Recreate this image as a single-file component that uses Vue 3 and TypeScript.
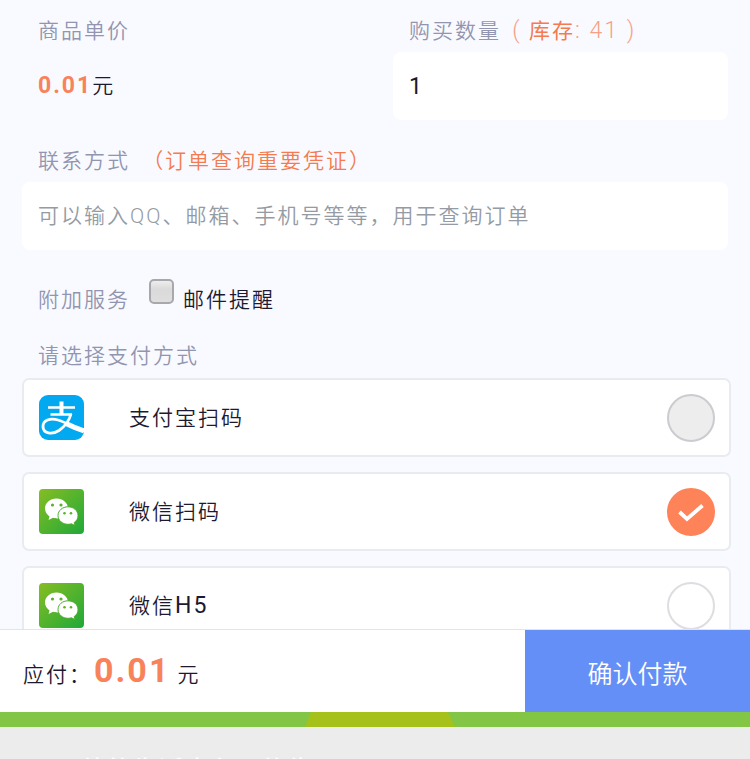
<script setup lang="ts">
import { ref } from 'vue'

interface PayMethod {
  id: string
  name: string
  suffix?: string
  brand: 'alipay' | 'wechat'
  muted?: boolean
}

const methods: PayMethod[] = [
  { id: 'alipay-scan', name: '支付宝扫码', brand: 'alipay', muted: true },
  { id: 'wechat-scan', name: '微信扫码', brand: 'wechat' },
  { id: 'wechat-h5', name: '微信', suffix: 'H5', brand: 'wechat' },
]

const stock = 41
const price = '0.01'
const quantity = ref('1')
const contact = ref('')
const mailNotice = ref(false)
const selected = ref('wechat-scan')
</script>

<template>
  <div class="page">
    <form class="order" @submit.prevent>
      <div class="content">
        <div class="summary">
          <section>
            <h2 class="label">商品单价</h2>
            <p class="price"><strong>{{ price }}</strong>元</p>
          </section>
          <section>
            <label class="label" for="quantity">购买数量 <span class="stock">( <b>库存</b>: {{ stock }} )</span></label>
            <input id="quantity" v-model="quantity" class="field" type="text" inputmode="numeric">
          </section>
        </div>

        <section class="contact">
          <label class="label" for="contact">联系方式 <span class="hint">（订单查询重要凭证）</span></label>
          <input id="contact" v-model="contact" class="field" type="text" placeholder="可以输入QQ、邮箱、手机号等等，用于查询订单">
        </section>

        <div class="extras">
          <span class="label">附加服务</span>
          <input id="mail" v-model="mailNotice" class="tick" type="checkbox">
          <label class="mail" for="mail">邮件提醒</label>
        </div>

        <fieldset class="methods">
          <legend class="label">请选择支付方式</legend>
          <label v-for="m in methods" :key="m.id" class="method" :for="m.id">
            <svg v-if="m.brand === 'alipay'" class="logo" viewBox="0 0 45 45" aria-hidden="true">
              <rect width="45" height="45" rx="9" fill="#02a9f1" />
              <g fill="none" stroke="#fff">
                <path d="M9 12.500H36M11.500 19.500H33" stroke-width="2.400" />
                <path d="M22.500 6.500V19" stroke-width="4" />
                <path d="M32 19C30 26.500 25 32 20 35.500C13 40 4 38.500 4 31.500C4 25.500 11 22.500 19 25C27 27.500 34 32 45 36" stroke-width="2.800" />
                <path d="M27 28.500C33 31.500 39 34 45 36" stroke-width="5" />
              </g>
            </svg>
            <svg v-else class="logo" viewBox="0 0 45 45" aria-hidden="true">
              <defs>
                <linearGradient :id="`${m.id}-green`" x1="0" y1="0" x2="1" y2="1">
                  <stop offset="0" stop-color="#86bd23" />
                  <stop offset="1" stop-color="#1fa938" />
                </linearGradient>
              </defs>
              <rect width="45" height="45" rx="4" :fill="`url(#${m.id}-green)`" />
              <path d="M17.500 9.500C11 9.500 6 14 6 19.500C6 22.800 7.800 25.600 10.500 27.400L9.500 31L14 28.800C15.500 29.300 16.500 29.400 18.500 29.400C24.500 29.400 29 25 29 19.500C29 14 24 9.500 17.500 9.500Z" fill="#fff" />
              <path d="M29 17.800C23.500 17.800 19 21.500 19 26.500C19 31.500 23.500 35.300 29 35.300C30.500 35.300 31.500 35.100 32.500 34.800L36 36.600L35.200 33.500C37.700 31.900 39 29.500 39 26.500C39 21.500 34.500 17.800 29 17.800Z" fill="#fff" stroke="#4caf2c" stroke-width="1" />
              <g fill="#5cb32b">
                <circle cx="13.500" cy="16" r="1.600" />
                <circle cx="22" cy="16" r="1.600" />
                <circle cx="25.500" cy="24.200" r="1.300" />
                <circle cx="32" cy="24.200" r="1.300" />
              </g>
            </svg>
            <span class="name">{{ m.name }}<span v-if="m.suffix" class="latin">{{ m.suffix }}</span></span>
            <input :id="m.id" v-model="selected" class="radio" :class="{ muted: m.muted }" type="radio" name="method" :value="m.id">
            <svg v-if="selected === m.id" class="check" viewBox="0 0 48 48" aria-hidden="true">
              <path d="M12.500 24L20 31L35.500 17.500" fill="none" stroke="#fff" stroke-width="3.800" />
            </svg>
          </label>
        </fieldset>
      </div>

      <footer class="pay">
        <p class="total">应付：<strong>{{ price }}</strong> 元</p>
        <button class="confirm" type="submit">确认付款</button>
      </footer>
    </form>

    <svg class="band" viewBox="0 0 750 15" preserveAspectRatio="none" aria-hidden="true">
      <rect width="750" height="15" fill="#83c645" />
      <path d="M311 0H448L455 15H305Z" fill="#a5c11a" />
    </svg>
    <div class="below"><p>他的生活太久不炸街了</p></div>
  </div>
</template>

<style>
body {
  margin: 0;
}
</style>

<style scoped>
.page {
  display: flex;
  flex-direction: column;
  height: 100vh;
  overflow: hidden;
  background: #ececec;
  color: #1c1930;
  font-family: Roboto, "Noto Sans CJK SC", sans-serif;
  font-size: 21px;
  font-weight: 350;
  line-height: 32px;
  letter-spacing: 2px;
}

.page * {
  box-sizing: border-box;
}

.order {
  display: flex;
  flex: 1;
  flex-direction: column;
  min-height: 0;
}

.content {
  flex: 1;
  min-height: 0;
  padding: 15px 19px 0 22px;
  overflow: hidden;
  background: #f9faff;
}

h2,
p {
  margin: 0;
}

input,
button {
  margin: 0;
  font: inherit;
  letter-spacing: inherit;
}

.label {
  display: block;
  padding: 0 16px;
  color: #9295b0;
  font-size: 21px;
  font-weight: 350;
}

.summary {
  display: grid;
  grid-template-columns: 1fr 1fr;
  gap: 36px;
  padding-right: 3px;
}

.price {
  padding: 23px 16px;
}

.price strong {
  color: #f8825a;
  font-size: 23px;
  font-weight: 700;
}

.stock {
  margin-left: 4px;
  color: #f5a284;
  font-size: 23px;
  font-weight: 300;
}

.stock b {
  color: #f47b50;
  font-size: 21px;
  font-weight: 400;
}

.hint {
  margin-left: 5px;
  color: #f47b50;
}

.field {
  display: block;
  width: 100%;
  height: 68px;
  margin-top: 5px;
  padding: 0 16px;
  border: 0;
  border-radius: 8px;
  outline: 0;
  background: #fff;
  color: #1c1930;
}

.summary .field {
  font-size: 23px;
  font-weight: 400;
}

.field::placeholder {
  color: #949ba4;
  opacity: 1;
}

.contact {
  padding: 20px 3px 0 0;
}

.extras {
  display: flex;
  padding-top: 29px;
}

.tick {
  width: 25px;
  height: 25px;
  margin-left: 3px;
  appearance: none;
  border: 2px solid #a8a8ac;
  border-radius: 5px;
  background: linear-gradient(#ededed, #dadada 40%, #dedede);
}

.tick:checked {
  background: #ff8358;
}

.mail {
  padding: 5px 0 0 9px;
}

.extras .label {
  padding-top: 5px;
}

.methods {
  display: flex;
  flex-direction: column;
  gap: 15px;
  min-width: 0;
  margin: 0;
  padding: 24px 0 0;
  border: 0;
}

.methods legend {
  float: left;
  height: 23px;
}

.method {
  position: relative;
  display: flex;
  flex-shrink: 0;
  align-items: center;
  height: 79px;
  padding: 0 14px 0 15px;
  border: 2px solid #e8ecf1;
  border-radius: 7px;
  background: #fff;
}

.logo {
  width: 45px;
  height: 45px;
}

.name {
  flex: 1;
  padding-left: 45px;
}

.latin {
  font-size: 23px;
  font-weight: 400;
}

.radio {
  width: 48px;
  height: 48px;
  appearance: none;
  border: 2px solid #dddde2;
  border-radius: 50%;
  background: #fff;
}

.radio.muted {
  border-color: #cbcbd0;
  background: #ededed;
}

.radio:checked {
  border-color: #ff8358;
  background: #ff8358;
}

.check {
  position: absolute;
  right: 14px;
  width: 48px;
  height: 48px;
  pointer-events: none;
}

.pay {
  display: flex;
  height: 83px;
  border-top: 1px solid #e1e5ea;
  background: #fff;
}

.total {
  flex: 1;
  padding: 24px 23px 0;
}

.total strong {
  margin-left: 2px;
  color: #f8825a;
  font-size: 34px;
  font-weight: 700;
}

.confirm {
  width: 30%;
  padding: 8px 0 0;
  border: 0;
  background: #648ff7;
  color: #fff;
  font-size: 25px;
  letter-spacing: 0;
}

.band {
  display: block;
  width: 100%;
  height: 15px;
}

.below {
  height: 32px;
  padding: 28px 80px 0;
  overflow: hidden;
  color: #fff;
  font-size: 26px;
  font-weight: 500;
  letter-spacing: 0;
}
</style>
